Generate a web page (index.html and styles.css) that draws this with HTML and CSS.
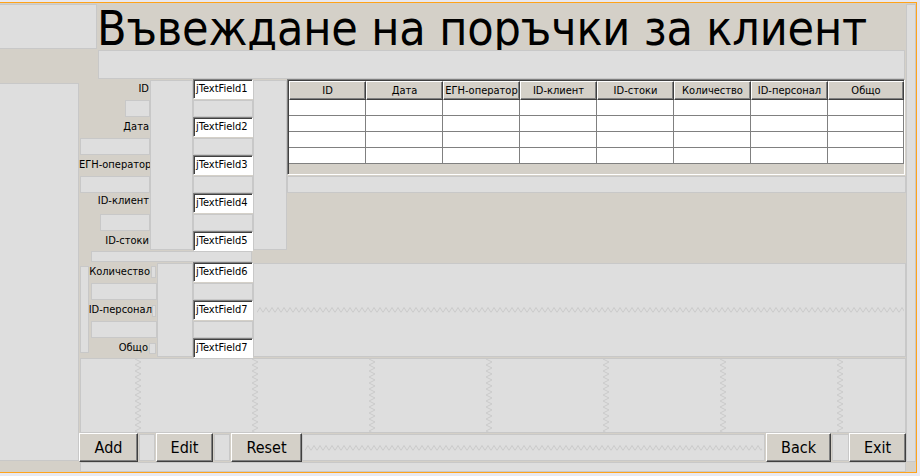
FILE: index.html
```html
<!DOCTYPE html>
<html lang="bg">
<head>
<meta charset="utf-8">
<title>Въвеждане на поръчки за клиент</title>
<link rel="stylesheet" href="styles.css">
</head>
<body>
<div class="form">
  <div class="body-row">
    <div class="main">
      <div class="header">
        <div class="gap hdr-left"></div>
        <h1 class="title">Въвеждане на поръчки за клиент</h1>
      </div>
      <div class="gap row2"></div>
      <div class="content">
        <div class="gap left-big"></div>
        <div class="right">
          <div class="top-section">
            <div class="left-part">
              <div class="fields-block">
                <div class="labels-col">
                  <div class="lbl">ID</div>
                  <div class="gap lgap g1"></div>
                  <div class="lbl">Дата</div>
                  <div class="gap lgap g2"></div>
                  <div class="lbl">ЕГН-оператор</div>
                  <div class="gap lgap g2"></div>
                  <div class="lbl lbl-up">ID-клиент</div>
                  <div class="gap lgap g4"></div>
                  <div class="lbl">ID-стоки</div>
                </div>
                <div class="gap vbox"></div>
                <div class="fields-col">
                  <div class="tf">jTextField1</div>
                  <div class="gap fgap"></div>
                  <div class="tf">jTextField2</div>
                  <div class="gap fgap"></div>
                  <div class="tf">jTextField3</div>
                  <div class="gap fgap"></div>
                  <div class="tf">jTextField4</div>
                  <div class="gap fgap"></div>
                  <div class="tf">jTextField5</div>
                </div>
                <div class="gap vbox2"></div>
              </div>
              <div class="gap longbox"></div>
            </div>
            <div class="table-part">
              <div class="scroll">
                <div class="grid">
                  <div class="th">ID</div>
                  <div class="th">Дата</div>
                  <div class="th">ЕГН-оператор</div>
                  <div class="th">ID-клиент</div>
                  <div class="th">ID-стоки</div>
                  <div class="th">Количество</div>
                  <div class="th">ID-персонал</div>
                  <div class="th">Общо</div>
                  <div class="td"></div><div class="td"></div><div class="td"></div><div class="td"></div><div class="td"></div><div class="td"></div><div class="td"></div><div class="td"></div>
                  <div class="td"></div><div class="td"></div><div class="td"></div><div class="td"></div><div class="td"></div><div class="td"></div><div class="td"></div><div class="td"></div>
                  <div class="td"></div><div class="td"></div><div class="td"></div><div class="td"></div><div class="td"></div><div class="td"></div><div class="td"></div><div class="td"></div>
                  <div class="td"></div><div class="td"></div><div class="td"></div><div class="td"></div><div class="td"></div><div class="td"></div><div class="td"></div><div class="td"></div>
                </div>
              </div>
              <div class="gap below-table"></div>
            </div>
          </div>
          <div class="mid-section">
            <div class="gap leftvert"></div>
            <div class="labels2">
              <div class="lrow">
                <span class="lbl2">Количество</span>
                <div class="gap sbox s1"></div>
              </div>
              <div class="gap l2gap"></div>
              <div class="lrow">
                <span class="lbl2">ID-персонал</span>
                <div class="gap sbox s2"></div>
              </div>
              <div class="gap l2gap"></div>
              <div class="lrow">
                <span class="lbl2">Общо</span>
                <div class="gap sbox s3"></div>
              </div>
            </div>
            <div class="gap vbox3"></div>
            <div class="fields-col">
              <div class="tf">jTextField6</div>
              <div class="gap fgap"></div>
              <div class="tf">jTextField7</div>
              <div class="gap fgap"></div>
              <div class="tf">jTextField7</div>
            </div>
            <div class="gap bigzig">
              <svg class="hzig" height="8" aria-hidden="true"><defs><pattern id="zh1" width="6" height="8" patternUnits="userSpaceOnUse"><path d="M0 6.5 L3 1.5 L6 6.5" stroke="#cacaca" stroke-width="1" fill="none"/></pattern></defs><rect width="100%" height="8" fill="url(#zh1)"/></svg>
            </div>
          </div>
          <div class="gap bottom-zig">
            <svg class="vzig" width="8" aria-hidden="true"><defs><pattern id="zv1" width="8" height="6" patternUnits="userSpaceOnUse"><path d="M1 0 L7 3 L1 6" stroke="#cacaca" stroke-width="1" fill="none"/></pattern></defs><rect width="8" height="100%" fill="url(#zv1)"/></svg>
            <svg class="vzig" width="8" aria-hidden="true"><defs><pattern id="zv2" width="8" height="6" patternUnits="userSpaceOnUse"><path d="M1 0 L7 3 L1 6" stroke="#cacaca" stroke-width="1" fill="none"/></pattern></defs><rect width="8" height="100%" fill="url(#zv2)"/></svg>
            <svg class="vzig" width="8" aria-hidden="true"><defs><pattern id="zv3" width="8" height="6" patternUnits="userSpaceOnUse"><path d="M1 0 L7 3 L1 6" stroke="#cacaca" stroke-width="1" fill="none"/></pattern></defs><rect width="8" height="100%" fill="url(#zv3)"/></svg>
            <svg class="vzig" width="8" aria-hidden="true"><defs><pattern id="zv4" width="8" height="6" patternUnits="userSpaceOnUse"><path d="M1 0 L7 3 L1 6" stroke="#cacaca" stroke-width="1" fill="none"/></pattern></defs><rect width="8" height="100%" fill="url(#zv4)"/></svg>
            <svg class="vzig" width="8" aria-hidden="true"><defs><pattern id="zv5" width="8" height="6" patternUnits="userSpaceOnUse"><path d="M1 0 L7 3 L1 6" stroke="#cacaca" stroke-width="1" fill="none"/></pattern></defs><rect width="8" height="100%" fill="url(#zv5)"/></svg>
            <svg class="vzig" width="8" aria-hidden="true"><defs><pattern id="zv6" width="8" height="6" patternUnits="userSpaceOnUse"><path d="M1 0 L7 3 L1 6" stroke="#cacaca" stroke-width="1" fill="none"/></pattern></defs><rect width="8" height="100%" fill="url(#zv6)"/></svg>
            <svg class="vzig" width="8" aria-hidden="true"><defs><pattern id="zv7" width="8" height="6" patternUnits="userSpaceOnUse"><path d="M1 0 L7 3 L1 6" stroke="#cacaca" stroke-width="1" fill="none"/></pattern></defs><rect width="8" height="100%" fill="url(#zv7)"/></svg>
          </div>
          <div class="buttons">
            <div class="btn b-add">Add</div>
            <div class="gap bgap"></div>
            <div class="btn b-edit">Edit</div>
            <div class="gap bgap"></div>
            <div class="btn b-reset">Reset</div>
            <div class="gap bzig">
              <svg class="hzig" height="8" aria-hidden="true"><defs><pattern id="zh2" width="6" height="8" patternUnits="userSpaceOnUse"><path d="M0 6.5 L3 1.5 L6 6.5" stroke="#cacaca" stroke-width="1" fill="none"/></pattern></defs><rect width="100%" height="8" fill="url(#zh2)"/></svg>
            </div>
            <div class="btn b-back">Back</div>
            <div class="gap bgap2"></div>
            <div class="btn b-exit">Exit</div>
          </div>
        </div>
      </div>
    </div>
    <div class="gap right-col"></div>
  </div>
  <div class="bottom-row"><div class="gap bottom-box"></div></div>
</div>
</body>
</html>
```

FILE: styles.css
```css
* { box-sizing: border-box; }
html, body { margin: 0; padding: 0; }
body {
  background: #e9e9f0;
  width: 920px;
  height: 476px;
  overflow: hidden;
  font-family: "DejaVu Sans Condensed", "DejaVu Sans", sans-serif;
  font-stretch: condensed;
  font-size: 11px;
  color: #000;
}
.gap { background: #dedede; border: 1px solid #c8c8c8; }

.form {
  margin-top: 2px;
  width: 917px;
  height: 471px;
  border-top: 1px solid #ffa31a;
  border-right: 1px solid #ffa31a;
  border-bottom: 1px solid #ffa31a;
  background: #d4d0c8;
  display: flex;
  flex-direction: column;
  padding-top: 1px;
}
.body-row { display: flex; height: 458px; }
.main { width: 906px; display: flex; flex-direction: column; }
.right-col { width: 10px; height: 458px; }
.bottom-row { height: 10px; display: flex; padding-left: 80px; }
.bottom-box { width: 826px; height: 10px; }

.header { display: flex; height: 45px; }
.hdr-left { width: 97px; height: 45px; border-left: 0; flex: none; }
.title {
  margin: 0;
  font-weight: normal;
  font-size: 48px;
  line-height: 49px;
  height: 45px;
  letter-spacing: -0.17px;
  white-space: nowrap;
}
.row2 { margin: 1px 0 0 98px; width: 807px; height: 29px; }

.content { display: flex; height: 383px; }
.left-big { width: 79px; height: 378px; margin-top: 4px; border-left: 0; flex: none; }
.right { width: 827px; display: flex; flex-direction: column; }

.top-section { display: flex; height: 183px; }
.left-part { width: 208px; display: flex; flex-direction: column; }
.fields-block { display: flex; height: 172px; }
.labels-col { width: 71px; display: flex; flex-direction: column; }
.lbl { height: 20px; line-height: 20px; text-align: right; white-space: nowrap; padding-right: 1px; }
.lbl-up { line-height: 16px; }
.lgap { height: 17px; margin-top: 1px; }
.g1 { margin-left: 46px; }
.g2 { margin-left: 1px; }
.g4 { margin-left: 21px; }
.vbox { width: 43px; height: 170px; margin-top: 1px; flex: none; }
.fields-col { width: 60px; display: flex; flex-direction: column; flex: none; }
.tf {
  height: 20px;
  background: #fff;
  border: 1px solid;
  border-color: #808080 #ffffff #ffffff #808080;
  box-shadow: inset 1px 1px #404040;
  padding-left: 2px;
  line-height: 18px;
  white-space: nowrap;
  overflow: hidden;
}
.fgap { height: 17px; margin-top: 1px; }
.vbox2 { width: 34px; height: 170px; margin-top: 1px; flex: none; }
.longbox { margin-left: 12px; width: 161px; height: 11px; }

.table-part { width: 619px; display: flex; flex-direction: column; }
.scroll {
  width: 618px;
  height: 96px;
  border-top: 1px solid #808080;
  border-left: 1px solid #808080;
  border-right: 1px solid #ffffff;
  border-bottom: 1px solid #ffffff;
  padding: 1px 0 0 1px;
  box-shadow: inset 1px 1px #404040;
  background: #d4d0c8;
}
.grid {
  display: grid;
  grid-template-columns: repeat(7, 77px) 76px;
  grid-template-rows: 19px repeat(4, 16px);
  width: 615px;
}
.th {
  background: #d4d0c8;
  border: 1px solid;
  border-color: #ffffff #404040 #404040 #ffffff;
  box-shadow: inset -1px -1px #808080;
  text-align: center;
  line-height: 17px;
  white-space: nowrap;
  overflow: hidden;
}
.td { background: #fff; border-right: 1px solid #808080; border-bottom: 1px solid #808080; }
.below-table { margin-top: 1px; height: 17px; }

.mid-section { display: flex; height: 96px; }
.leftvert { margin: 4px 0 0 1px; width: 9px; height: 87px; flex: none; }
.labels2 { width: 68px; display: flex; flex-direction: column; flex: none; }
.lrow { height: 20px; display: flex; justify-content: flex-end; align-items: flex-start; }
.lbl2 { line-height: 20px; white-space: nowrap; }
.sbox { flex: none; }
.s1 { width: 5px; height: 12px; margin: 4px 1px 0 1px; }
.s2 { width: 4px; height: 12px; margin: 5px 1px 0 0; }
.s3 { width: 7px; height: 11px; margin: 5px 1px 0 1px; }
.l2gap { margin-left: 2px; height: 17px; margin-top: 1px; }
.vbox3 { width: 36px; height: 94px; margin-top: 1px; flex: none; }
.bigzig {
  flex: 1;
  margin-top: 1px;
  height: 94px;
  display: flex;
  align-items: center;
  padding: 0 1px 0 3px;
}
.hzig { width: 100%; display: block; }

.bottom-zig {
  margin-left: 1px;
  height: 75px;
  display: flex;
  padding-left: 53px;
  gap: 109px;
}
.vzig { height: 100%; display: block; flex: none; }

.buttons { display: flex; height: 29px; align-items: flex-start; }
.btn {
  height: 29px;
  font-size: 16px;
  background: #d4d0c8;
  border: 1px solid;
  border-color: #ffffff #404040 #404040 #ffffff;
  box-shadow: inset -1px -1px #808080;
  display: flex;
  align-items: center;
  justify-content: center;
  flex: none;
}
.b-add { width: 59px; }
.b-edit { width: 57px; }
.b-reset { width: 71px; }
.b-back { width: 65px; }
.b-exit { width: 57px; }
.bgap { margin: 1px 1px 0 1px; width: 16px; height: 27px; flex: none; }
.bgap2 { margin: 1px 0 0 1px; width: 17px; height: 27px; flex: none; }
.bzig {
  flex: 1;
  margin: 1px 1px 0 0;
  height: 27px;
  display: flex;
  align-items: center;
  padding: 0 2px;
}
```
